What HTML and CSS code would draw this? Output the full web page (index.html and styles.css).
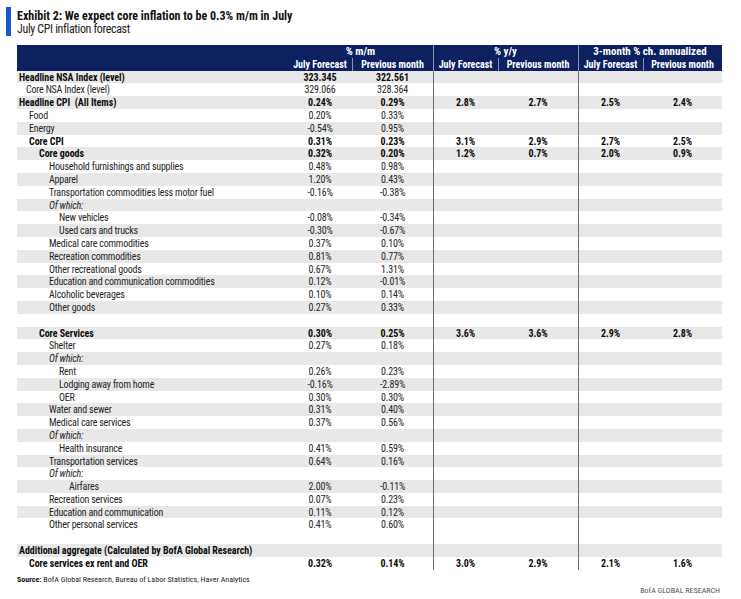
FILE: index.html
```html
<!DOCTYPE html>
<html lang="en">
<head>
<meta charset="utf-8">
<title>Exhibit 2: July CPI inflation forecast</title>
<link rel="stylesheet" href="styles.css">
</head>
<body>
<div class="exhibit">
  <div class="title-block">
    <h1 class="title">Exhibit 2: We expect core inflation to be 0.3% m/m in July</h1>
    <p class="subtitle">July CPI inflation forecast</p>
  </div>

  <table class="cpi">
    <colgroup>
      <col class="c-label">
      <col class="c-fc">
      <col class="c-prev">
      <col class="c-fc">
      <col class="c-prev">
      <col class="c-fc">
      <col class="c-prev2">
    </colgroup>
    <thead>
      <tr class="group-row">
        <th></th>
        <th colspan="2">% m/m</th>
        <th colspan="2" class="hsep">% y/y</th>
        <th colspan="2" class="hsep">3-month % ch. annualized</th>
      </tr>
      <tr>
        <th></th>
        <th>July Forecast</th>
        <th class="hsep">Previous month</th>
        <th class="hsep">July Forecast</th>
        <th class="hsep">Previous month</th>
        <th class="hsep">July Forecast</th>
        <th class="hsep">Previous month</th>
      </tr>
    </thead>
    <tbody>
      <tr class="shade bold"><td class="l0">Headline NSA Index (level)</td><td>323.345</td><td>322.561</td><td></td><td></td><td></td><td></td></tr>
      <tr><td class="l1a">Core NSA Index (level)</td><td>329.066</td><td>328.364</td><td></td><td></td><td></td><td></td></tr>
      <tr class="shade bold"><td class="l0">Headline CPI&nbsp; (All Items)</td><td>0.24%</td><td>0.29%</td><td>2.8%</td><td>2.7%</td><td>2.5%</td><td>2.4%</td></tr>
      <tr><td class="l1">Food</td><td>0.20%</td><td>0.33%</td><td></td><td></td><td></td><td></td></tr>
      <tr class="shade"><td class="l1">Energy</td><td>-0.54%</td><td>0.95%</td><td></td><td></td><td></td><td></td></tr>
      <tr class="bold"><td class="l1">Core CPI</td><td>0.31%</td><td>0.23%</td><td>3.1%</td><td>2.9%</td><td>2.7%</td><td>2.5%</td></tr>
      <tr class="shade bold"><td class="l2">Core goods</td><td>0.32%</td><td>0.20%</td><td>1.2%</td><td>0.7%</td><td>2.0%</td><td>0.9%</td></tr>
      <tr><td class="l3">Household furnishings and supplies</td><td>0.48%</td><td>0.98%</td><td></td><td></td><td></td><td></td></tr>
      <tr class="shade"><td class="l3">Apparel</td><td>1.20%</td><td>0.43%</td><td></td><td></td><td></td><td></td></tr>
      <tr><td class="l3">Transportation commodities less motor fuel</td><td>-0.16%</td><td>-0.38%</td><td></td><td></td><td></td><td></td></tr>
      <tr class="shade"><td class="l3 note">Of which:</td><td></td><td></td><td></td><td></td><td></td><td></td></tr>
      <tr><td class="l4">New vehicles</td><td>-0.08%</td><td>-0.34%</td><td></td><td></td><td></td><td></td></tr>
      <tr class="shade"><td class="l4">Used cars and trucks</td><td>-0.30%</td><td>-0.67%</td><td></td><td></td><td></td><td></td></tr>
      <tr><td class="l3">Medical care commodities</td><td>0.37%</td><td>0.10%</td><td></td><td></td><td></td><td></td></tr>
      <tr class="shade"><td class="l3">Recreation commodities</td><td>0.81%</td><td>0.77%</td><td></td><td></td><td></td><td></td></tr>
      <tr><td class="l3">Other recreational goods</td><td>0.67%</td><td>1.31%</td><td></td><td></td><td></td><td></td></tr>
      <tr class="shade"><td class="l3">Education and communication commodities</td><td>0.12%</td><td>-0.01%</td><td></td><td></td><td></td><td></td></tr>
      <tr><td class="l3">Alcoholic beverages</td><td>0.10%</td><td>0.14%</td><td></td><td></td><td></td><td></td></tr>
      <tr class="shade"><td class="l3">Other goods</td><td>0.27%</td><td>0.33%</td><td></td><td></td><td></td><td></td></tr>
      <tr><td></td><td></td><td></td><td></td><td></td><td></td><td></td></tr>
      <tr class="shade bold"><td class="l2">Core Services</td><td>0.30%</td><td>0.25%</td><td>3.6%</td><td>3.6%</td><td>2.9%</td><td>2.8%</td></tr>
      <tr><td class="l3">Shelter</td><td>0.27%</td><td>0.18%</td><td></td><td></td><td></td><td></td></tr>
      <tr class="shade"><td class="l3 note">Of which:</td><td></td><td></td><td></td><td></td><td></td><td></td></tr>
      <tr><td class="l4">Rent</td><td>0.26%</td><td>0.23%</td><td></td><td></td><td></td><td></td></tr>
      <tr class="shade"><td class="l4">Lodging away from home</td><td>-0.16%</td><td>-2.89%</td><td></td><td></td><td></td><td></td></tr>
      <tr><td class="l4">OER</td><td>0.30%</td><td>0.30%</td><td></td><td></td><td></td><td></td></tr>
      <tr class="shade"><td class="l3">Water and sewer</td><td>0.31%</td><td>0.40%</td><td></td><td></td><td></td><td></td></tr>
      <tr><td class="l3">Medical care services</td><td>0.37%</td><td>0.56%</td><td></td><td></td><td></td><td></td></tr>
      <tr class="shade"><td class="l3 note">Of which:</td><td></td><td></td><td></td><td></td><td></td><td></td></tr>
      <tr><td class="l4">Health insurance</td><td>0.41%</td><td>0.59%</td><td></td><td></td><td></td><td></td></tr>
      <tr class="shade"><td class="l3">Transportation services</td><td>0.64%</td><td>0.16%</td><td></td><td></td><td></td><td></td></tr>
      <tr><td class="l3 note">Of which:</td><td></td><td></td><td></td><td></td><td></td><td></td></tr>
      <tr class="shade"><td class="l5">Airfares</td><td>2.00%</td><td>-0.11%</td><td></td><td></td><td></td><td></td></tr>
      <tr><td class="l3">Recreation services</td><td>0.07%</td><td>0.23%</td><td></td><td></td><td></td><td></td></tr>
      <tr class="shade"><td class="l3">Education and communication</td><td>0.11%</td><td>0.12%</td><td></td><td></td><td></td><td></td></tr>
      <tr><td class="l3">Other personal services</td><td>0.41%</td><td>0.60%</td><td></td><td></td><td></td><td></td></tr>
      <tr><td></td><td></td><td></td><td></td><td></td><td></td><td></td></tr>
      <tr class="shade bold"><td class="l0">Additional aggregate (Calculated by BofA Global Research)</td><td></td><td></td><td></td><td></td><td></td><td></td></tr>
      <tr class="bold"><td class="l1">Core services ex rent and OER</td><td>0.32%</td><td>0.14%</td><td>3.0%</td><td>2.9%</td><td>2.1%</td><td>1.6%</td></tr>
    </tbody>
  </table>

  <p class="source"><b>Source:</b> BofA Global Research, Bureau of Labor Statistics, Haver Analytics</p>
  <p class="brand">BofA GLOBAL RESEARCH</p>
</div>
</body>
</html>
```

FILE: styles.css
```css
html, body {
  margin: 0;
  padding: 0;
  background: #ffffff;
}

body {
  font-family: "Liberation Sans Narrow", "Roboto Condensed", "DejaVu Sans Condensed", "Liberation Sans", Arial, sans-serif;
  color: #1c1c1c;
}

.exhibit {
  width: 741px;
  padding-top: 7px;
}

.title-block {
  margin-left: 6px;
  border-left: 5px solid #1658c8;
  padding: 2px 0 0 6px;
  height: 27px;
}

.title {
  margin: 0;
  font-size: 12px;
  line-height: 14px;
  font-weight: bold;
  color: #111111;
}

.subtitle {
  margin: 0;
  font-size: 12px;
  line-height: 13px;
  letter-spacing: -0.35px;
  color: #222222;
}

.cpi {
  margin: 9px 0 0 17px;
  width: 705px;
  table-layout: fixed;
  border-collapse: separate;
  border-spacing: 0;
  font-size: 10px;
}

.c-label { width: 271px; }
.c-fc { width: 64px; }
.c-prev { width: 81px; }
.c-prev2 { width: 79px; }

.cpi col:nth-child(4),
.cpi col:nth-child(6) { width: 65px; }
.cpi col:nth-child(5) { width: 80px; }

.cpi tr {
  height: 12.8px;
}

.cpi th,
.cpi td {
  box-sizing: border-box;
  padding: 1px 0 0;
  line-height: 11.8px;
  white-space: nowrap;
  overflow: visible;
  text-align: center;
  font-weight: normal;
  letter-spacing: -0.2px;
  color: #262626;
}

.cpi thead th {
  background: #0d2060;
  color: #ffffff;
  font-weight: bold;
  letter-spacing: 0;
  padding-top: 1.5px;
  line-height: 11.3px;
}

.cpi thead .group-row th {
  font-size: 11px;
  padding-top: 1px;
  line-height: 11.8px;
}

.cpi thead .hsep {
  box-shadow: inset 1px 0 #8a93b3;
}

.cpi tbody td:nth-child(4),
.cpi tbody td:nth-child(6) {
  box-shadow: inset 1px 0 #6e6e6e;
}

.cpi .shade td {
  background: #e8e8e8;
}

.cpi .bold td {
  font-weight: bold;
  letter-spacing: -0.05px;
  color: #0d0d0d;
}

.cpi td.l0,
.cpi td.l1a,
.cpi td.l1,
.cpi td.l2,
.cpi td.l3,
.cpi td.l4,
.cpi td.l5 {
  text-align: left;
}

.l0 { padding-left: 2px !important; }
.l1a { padding-left: 9px !important; }
.l1 { padding-left: 12px !important; }
.l2 { padding-left: 22px !important; }
.l3 { padding-left: 32px !important; }
.l4 { padding-left: 42px !important; }
.l5 { padding-left: 52px !important; }

.note {
  font-style: italic;
}

.source {
  margin: 5px 0 0 17px;
  font-size: 8px;
  line-height: 10px;
  color: #222222;
}

.source b {
  font-weight: bold;
  color: #111111;
}

.brand {
  margin: 1px 21px 0 0;
  font-size: 8px;
  line-height: 10px;
  text-align: right;
  color: #555555;
}
```
